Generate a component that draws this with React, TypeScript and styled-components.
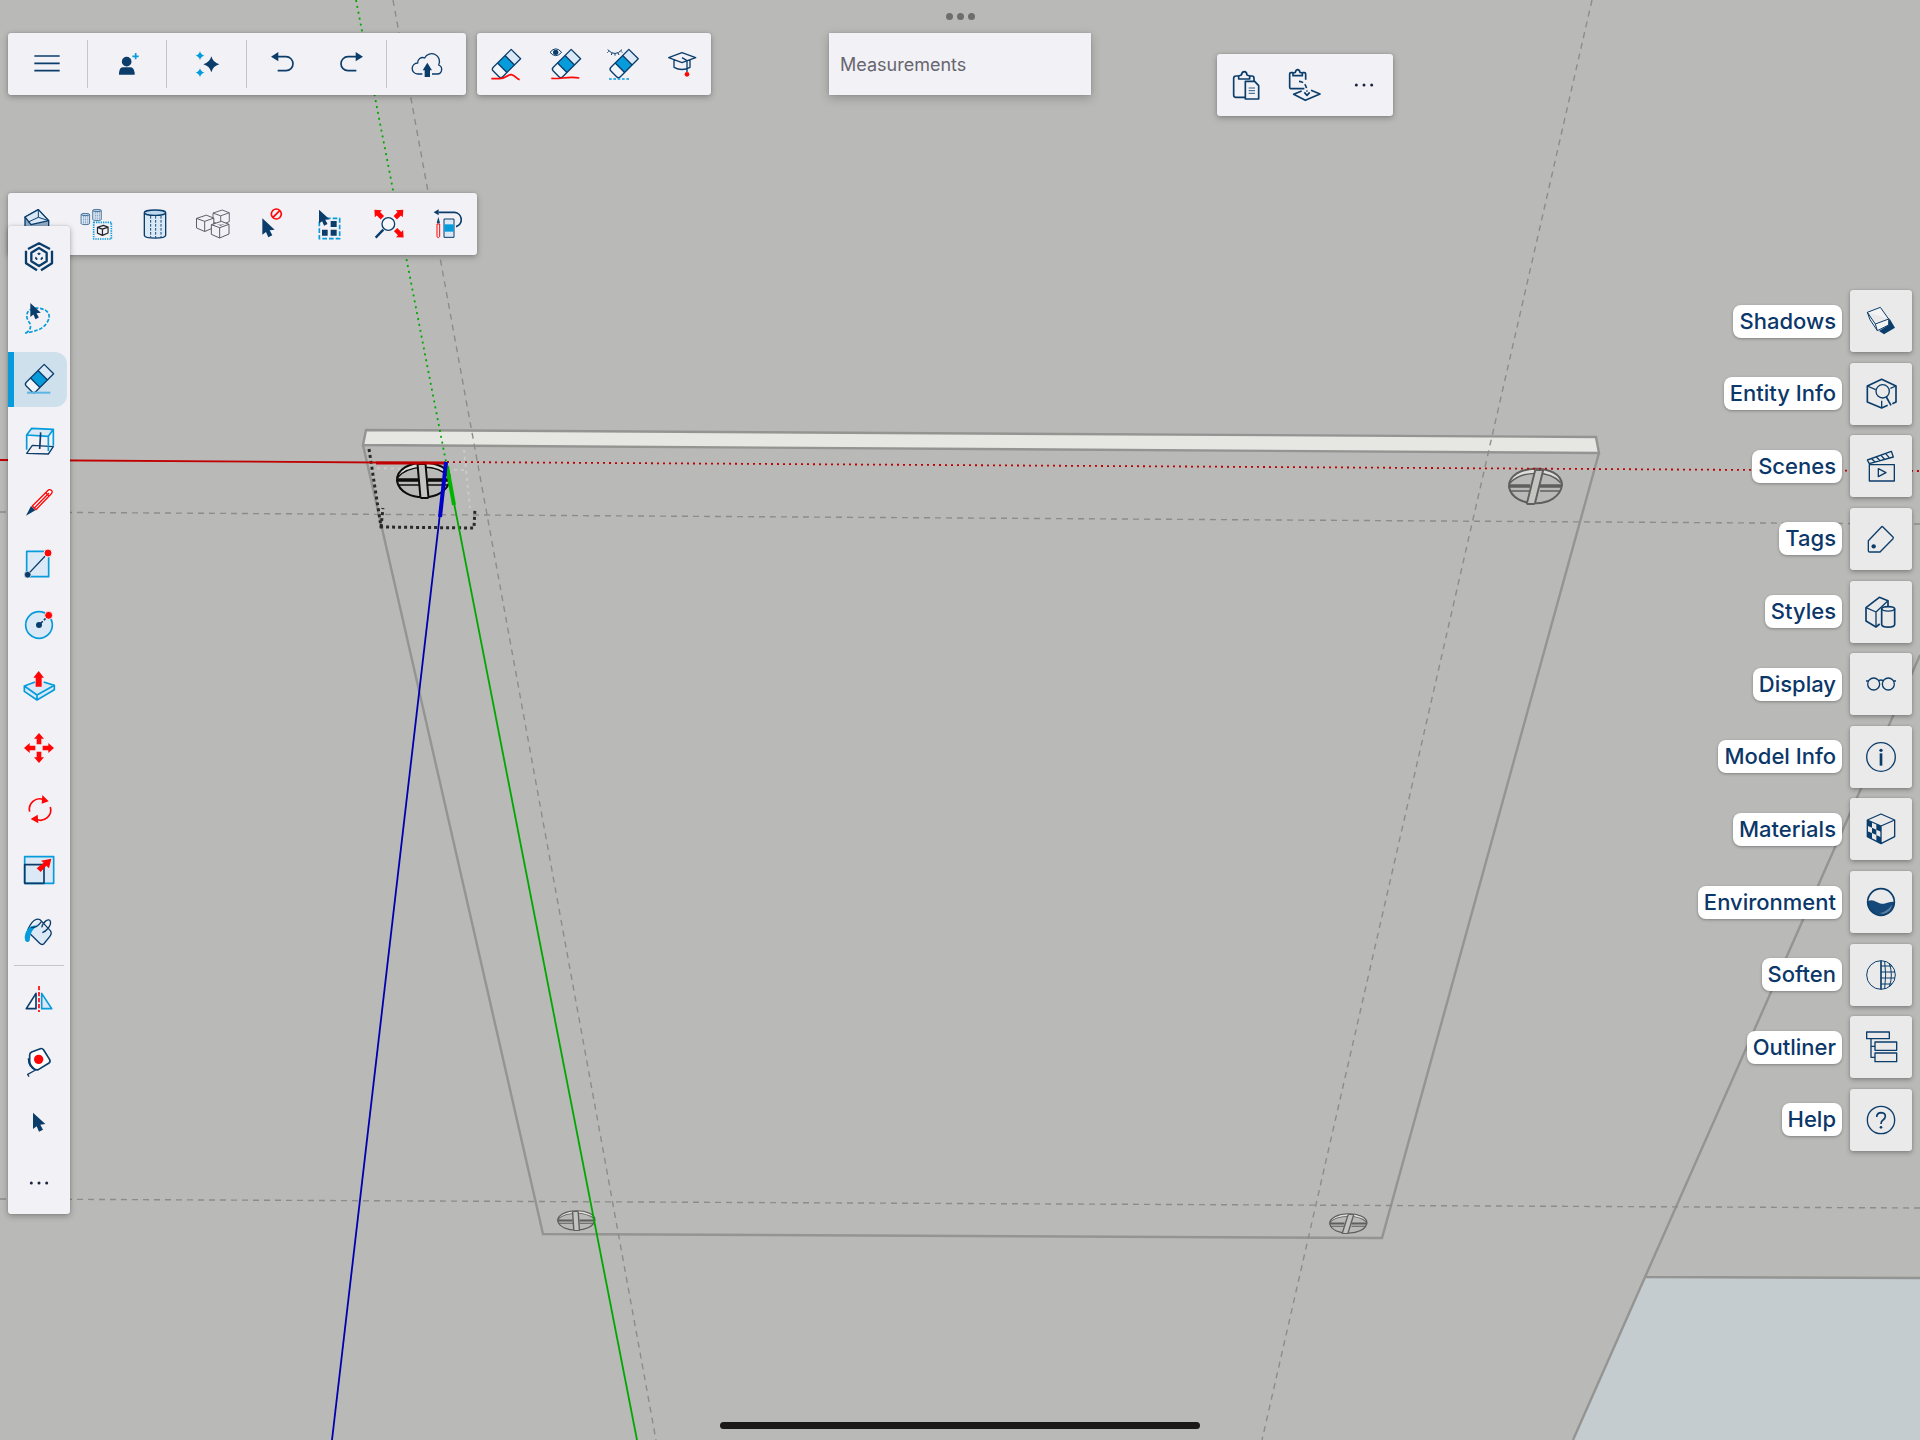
import React from "react";
import styled, { createGlobalStyle } from "styled-components";

const NAVY = "#0b3d6b";
const BLUE = "#069bdb";
const PALE = "#dbe9f7";
const RED = "#ff0505";

const GlobalStyle = createGlobalStyle`
  *, *::before, *::after { box-sizing: border-box; }
  body {
    margin: 0;
    background: #b9b9b7;
    font-family: Inter, "Liberation Sans", sans-serif;
  }
  button, input { font: inherit; }
`;

/* ---------- layout ---------- */

const Stage = styled.div`
  position: relative;
  display: flex;
  flex-direction: column;
  min-height: 100vh;
  padding: 0 8px;
  overflow: hidden;
`;

const Viewport = styled.svg`
  position: absolute;
  inset: 0;
  width: 100%;
  height: 100%;
`;

const WindowHandle = styled.button`
  position: relative;
  display: flex;
  align-items: center;
  justify-content: center;
  align-self: center;
  gap: 4px;
  height: 33px;
  padding: 0;
  border: 0;
  background: none;
`;

const HandleDot = styled.span`
  width: 7px;
  height: 7px;
  border-radius: 50%;
  background: #6e6e6c;
`;

const Header = styled.header`
  position: relative;
  display: grid;
  grid-template-columns: 1fr 262px 1fr;
  align-items: start;
  min-height: 160px;
`;

const HeaderLeft = styled.div`
  display: flex;
  gap: 11px;
`;

const HeaderRight = styled.div`
  padding: 21px 0 0 126px;
`;

const Body = styled.main`
  position: relative;
  display: flex;
  flex: 1;
  align-items: flex-start;
  justify-content: space-between;
`;

const LeftColumn = styled.div`
  display: flex;
  flex-direction: column;
  align-items: flex-start;
`;

const Panel = styled.div`
  display: flex;
  background: #f2f1f6;
  border-radius: 3px;
  box-shadow: 0 2px 6px rgba(0, 0, 0, 0.28), 0 0 2px rgba(0, 0, 0, 0.15);
`;

const Toolbar = styled(Panel)<{ $width: number }>`
  width: ${(p) => p.$width}px;
  height: 62px;
`;

const Segment = styled.div<{ $grow?: number }>`
  display: flex;
  flex: ${(p) => p.$grow ?? 1} 1 0;
  margin: 7px 0;

  & + & {
    border-left: 1px solid #c6c6ca;
  }
`;

const ToolButton = styled.button`
  display: flex;
  flex: 1 1 0;
  align-items: center;
  justify-content: center;
  min-width: 0;
  padding: 0;
  border: 0;
  background: none;
`;

const SideBar = styled(Panel)`
  position: relative;
  flex-direction: column;
  width: 62px;
  min-height: 988px;
  margin-top: -29px;
`;

const SideButton = styled(ToolButton)<{ $active?: boolean }>`
  position: relative;
  z-index: 0;

  &::before {
    content: "";
    display: ${(p) => (p.$active ? "block" : "none")};
    position: absolute;
    z-index: -1;
    inset: 3px 3px 3px 0;
    border-left: 6px solid ${BLUE};
    border-radius: 0 12px 12px 0;
    background: #cfe0ed;
  }
`;

const Divider = styled.hr`
  width: 50px;
  height: 1px;
  margin: 2px auto 3px;
  border: 0;
  background: #c6c6ca;
`;

const MeasureField = styled.label`
  display: flex;
  height: 62px;
  background: #f2f1f6;
  box-shadow: 0 3px 10px rgba(0, 0, 0, 0.22), 0 0 2px rgba(0, 0, 0, 0.15);
`;

const MeasureInput = styled.input`
  width: 100%;
  padding: 0 11px;
  border: 0;
  outline: 0;
  background: none;
  color: #66666e;
  font-size: 18px;

  &::placeholder {
    color: #66666e;
    opacity: 1;
  }
`;

const InspectorNav = styled.nav`
  display: flex;
  flex-direction: column;
  align-items: flex-end;
  justify-content: space-between;
  min-height: 861px;
  margin-top: 97px;
`;

const InspectorButton = styled.button`
  display: flex;
  align-items: center;
  gap: 8px;
  padding: 0;
  border: 0;
  background: none;
`;

const InspectorLabel = styled.span`
  padding: 0 6px;
  border-radius: 8px;
  background: #fff;
  box-shadow: 0 1px 3px rgba(0, 0, 0, 0.3);
  color: #0c3769;
  font-size: 22px;
  font-weight: 500;
  line-height: 33px;
`;

const Tile = styled.span`
  display: flex;
  align-items: center;
  justify-content: center;
  width: 62px;
  height: 62px;
  border-radius: 3px;
  background: #eaeaea;
  box-shadow: 0 2px 5px rgba(0, 0, 0, 0.28), 0 0 2px rgba(0, 0, 0, 0.15);
`;

const HomeIndicator = styled.div`
  position: relative;
  align-self: center;
  width: 25vw;
  height: 7px;
  margin-bottom: 11px;
  border-radius: 4px;
  background: #1b1918;
`;

const Glyph = styled.svg`
  flex: none;
  width: 40px;
  height: 40px;
  fill: none;
  stroke-width: 5;
  stroke-linejoin: round;
`;

/* ---------- icon parts ---------- */

type Draw = React.ReactNode;

const Icon = ({ children }: { children: Draw }) => (
  <Glyph viewBox="-60 -60 120 120" aria-hidden="true">
    {children}
  </Glyph>
);

const Star = ({ x, y, s, c }: { x: number; y: number; s: number; c: string }) => (
  <path transform={`translate(${x} ${y}) scale(${s})`} fill={c} d="M0-24Q5-5 24 0Q5 5 0 24Q-5 5-24 0Q-5-5 0-24Z" />
);

const Eraser = ({ x = 0 }: { x?: number }) => (
  <g transform={`translate(${x} 0) rotate(45)`}>
    <path d="M-20-42H20V34Q20 42 12 42H-12Q-20 42-20 34Z" fill="#f0f5fb" />
    <path d="M-20-42H20V-16H-20Z" fill={PALE} />
    <path d="M-20-16H20V16H-20Z" fill={BLUE} />
    <path d="M-20-42H20V34Q20 42 12 42H-12Q-20 42-20 34ZM-20-16H20M-20 16H20" stroke={NAVY} strokeWidth="4" />
  </g>
);

const Cursor = ({ x, y, s = 1 }: { x: number; y: number; s?: number }) => (
  <path transform={`translate(${x} ${y}) scale(${s})`} fill={NAVY} d="M0 0L37 34L22 36L30 51L18 57L11 41L0 49Z" />
);

const Arrow = ({ t, s = 1 }: { t: string; s?: number }) => (
  <path transform={`${t} scale(${s})`} fill={RED} d="M0-45L15-28H7V-11H-7V-28H-15Z" />
);

const Cube = ({ x, y, s, c, w }: { x: number; y: number; s: number; c: string; w: number }) => (
  <path
    transform={`translate(${x} ${y}) scale(${s})`}
    stroke={c}
    strokeWidth={w}
    fill="#f2f1f6"
    d="M-26-15L4-25L27-16V13L-1 25L-26 14ZM-26-15L-1-6L27-16M-1-6V25"
  />
);

const Can = ({ x, y, s, w }: { x: number; y: number; s: number; w: number }) => (
  <g transform={`translate(${x} ${y}) scale(${s})`} stroke={NAVY} strokeWidth={w}>
    <path fill={PALE} d="M-32-34V34C-30 45 30 45 32 34V-34" />
    <ellipse cy="-34" rx="32" ry="8" fill="#bcd8ee" />
    <path strokeDasharray="8 4" strokeWidth={w * 0.7} d="M-13-24V40M2-24V42M18-24V40" />
  </g>
);

const Dots = () => (
  <g fill="#1c2440">
    <circle cx="-23" r="4.5" />
    <circle r="4.5" />
    <circle cx="23" r="4.5" />
  </g>
);

/* ---------- icons ---------- */

const undoShape = (
  <>
    <path d="M-33-22L-11-36V-8Z" fill={NAVY} />
    <path d="M-12-22H12A21 21 0 0 1 12 20H-13" stroke={NAVY} />
  </>
);

const mainIcons: Record<string, Draw> = {
  menu: <path d="M-38-24H38M-38-2H38M-38 20H38" stroke={NAVY} />,
  person: (
    <>
      <circle cx="-1" cy="-7" r="14.5" fill={NAVY} />
      <path d="M-24 32V26Q-22 10-12 10H10Q20 10 23 26V32Z" fill={NAVY} />
      <path d="M26-33V-14M16-23H35" stroke={BLUE} />
    </>
  ),
  sparkle: (
    <>
      <Star x={16} y={1} s={1} c={NAVY} />
      <Star x={-18} y={-25} s={0.55} c={BLUE} />
      <Star x={-18} y={26} s={0.55} c={BLUE} />
    </>
  ),
  undo: undoShape,
  redo: <g transform="scale(-1 1)">{undoShape}</g>,
  cloud: (
    <>
      <path
        d="M-14 30H-28A16 16 0 0 1-28-3A15 15 0 0 1-7-18A23 23 0 0 1 35 3A14 14 0 0 1 31 30H15"
        stroke={NAVY}
        strokeWidth="4"
      />
      <path d="M1-4L15 19H9V39H-7V19H-13Z" fill={NAVY} />
    </>
  ),
};

const eraseIcons: [string, Draw][] = [
  [
    "Erase edges",
    <>
      <Eraser />
      <path d="M-44 44H-20C0 44 4 31 16 32C28 34 32 46 41 47" stroke={RED} />
    </>,
  ],
  [
    "Erase and show",
    <>
      <Eraser x={3} />
      <path d="M-45-35Q-28-56-10-35Q-28-15-45-35Z" fill="#f2f1f6" stroke={NAVY} strokeWidth="3" />
      <circle cx="-28" cy="-35" r="8" fill={NAVY} />
      <path d="M-41 43C-15 46 10 36 43 42" stroke={RED} />
    </>,
  ],
  [
    "Hide",
    <>
      <Eraser x={2} />
      <path
        d="M-46-43Q-24-20-3-43M-43-38L-47-34M-33-33L-35-27M-24-31V-25M-15-33L-12-27M-6-38L-2-34"
        stroke={NAVY}
        strokeWidth="3"
      />
      <path d="M-42 45H19" stroke={BLUE} strokeDasharray="8 5" />
    </>,
  ],
  [
    "Learn",
    <>
      <path d="M-40-19L0-34L41-19L0-4ZM-24-11V10Q0 23 24 10V-11" stroke={NAVY} strokeWidth="4" />
      <path d="M0-19L15-10V24" stroke={NAVY} strokeWidth="4" />
      <circle cx="15" cy="31" r="7" fill={RED} />
    </>,
  ],
];

const clipIcons: [string, Draw][] = [
  [
    "Paste",
    <g stroke={NAVY}>
      <path d="M-21-27H-30Q-37-27-37-20V30Q-37 37-30 37H-2M10-27H18Q24-27 24-20V-11" />
      <path d="M-22-18V-27L-14-30Q-12-40-5-40Q2-40 3-30L11-27V-18Z" />
      <path d="M-2-11H26L38 2V42H-2Z" />
      <path strokeWidth="2.5" d="M8 9H27M8 17H27M8 25H27" />
    </g>,
  ],
  [
    "Paste in place",
    <g stroke={NAVY}>
      <path d="M-36-37H-42Q-46-37-46-33V7Q-46 11-42 11H-2M-8-37H-2Q2-37 2-33V-16" />
      <path d="M-36-28V-36L-29-38Q-27-46-22-46Q-17-46-15-38L-8-36V-28Z" />
      <path d="M-10 18L-34 28L1 46L45 27L18 16M-2 22L6 31L14 22" />
      <path strokeDasharray="13 7" d="M-18-11Q4-10 6 20" />
    </g>,
  ],
  ["More clipboard actions", <Dots />],
];

const modelIcons: [string, Draw][] = [
  [
    "Solid tools",
    <g stroke={NAVY} strokeWidth="4">
      <path fill="#8fabc4" d="M-36-21L4-43L35-10V18L-5 35L-36 10Z" />
      <path fill={PALE} d="M-36-21L4-43L35-10L-18 2Z" />
      <path strokeWidth="3" d="M4-43V-20L35-10M4-20L-26-6" />
    </g>,
  ],
  [
    "Make component",
    <>
      <Can x={-32} y={-15} s={0.4} w={5} />
      <Can x={3} y={-27} s={0.4} w={5} />
      <path d="M-7-5H46V45H-7Z" stroke={BLUE} strokeDasharray="4 3" />
      <Cube x={20} y={19} s={0.6} c="#20242c" w={6} />
    </>,
  ],
  ["Group", <Can x={0} y={0} s={1} w={4} />],
  [
    "Explode",
    <>
      <Cube x={24} y={-19} s={0.92} c="#5a5a66" w={3} />
      <Cube x={-24} y={-2} s={0.98} c="#5a5a66" w={3} />
      <Cube x={21} y={17} s={1} c="#5a5a66" w={3} />
    </>,
  ],
  [
    "Deselect",
    <>
      <Cursor x={-29} y={-17} />
      <circle cx="13" cy="-30" r="15" stroke={RED} />
      <path d="M3-20L23-40" stroke={RED} />
    </>,
  ],
  [
    "Select all",
    <>
      <path d="M-32-17H29V44H-32Z" stroke={BLUE} strokeDasharray="14 6" />
      <path fill={NAVY} d="M2-9H20V9H2ZM-24 17H-7V35H-24ZM2 17H20V35H2Z" />
      <path fill="#f2f1f6" d="M-40-25H-12V-2H-28V-10H-40Z" />
      <Cursor x={-33} y={-43} s={0.85} />
    </>,
  ],
  [
    "Zoom extents",
    <>
      <circle cx="-2" cy="0" r="19" stroke={NAVY} strokeWidth="4" fill="#f6f8fc" />
      <path d="M-17 17L-40 41" stroke={NAVY} strokeWidth="7" />
      <Arrow t="translate(-12 -11) rotate(-45)" />
      <Arrow t="translate(11 -11) rotate(45)" />
      <Arrow t="translate(12 9) rotate(135)" />
    </>,
  ],
  [
    "Undo erase",
    <>
      <path d="M-28-35H20A22 22 0 0 1 24 8" stroke={NAVY} />
      <path d="M-43-35L-28-44V-26Z" fill={NAVY} />
      <path d="M-33 0H-25V38Q-29 44-33 38Z" stroke={RED} strokeWidth="3" />
      <path d="M-29-22L-24-2H-34Z" fill={NAVY} />
      <path d="M-12-15H18V40H-12Z" fill={PALE} stroke={NAVY} strokeWidth="3" />
      <path d="M-11 1H17V23H-11Z" fill={BLUE} />
    </>,
  ],
];

const sideIcons: [string, Draw][] = [
  [
    "SketchUp",
    <g stroke={NAVY}>
      <path strokeWidth="7" d="M-39-19V19L-6 40M39-19V19L6 40M-33-24L0-41L33-24" />
      <path strokeWidth="7" d="M0-27L23-13V13L0 27L-23 13V-13Z" />
      <path fill={NAVY} strokeWidth="3" d="M-4-10L0-12L4-10L0-7ZM-10 1L-6 4V8L-10 6ZM10 1L6 4V8L10 6Z" />
    </g>,
  ],
  [
    "Lasso",
    <>
      <path
        d="M-40 45C-24 38-22 22-30 12C-42-4-40-30-5-30C34-26 36-4 24 14C10 36-14 40-40 45Z"
        stroke={BLUE}
        strokeDasharray="11 5"
      />
      <Cursor x={-26} y={-45} s={0.85} />
    </>,
  ],
  [
    "Eraser",
    <>
      <Eraser />
      <path d="M-36 41H34" stroke="#5ab5e5" strokeWidth="6" />
    </>,
  ],
  [
    "Position model",
    <>
      <path d="M-37 37L-20 13L43 17L28 39Z" stroke={NAVY} strokeWidth="4" />
      <path d="M-22-38L43-35L28-14L-37-18Z" fill={PALE} />
      <path d="M-37 26V-18L-22-38L43-35V14M-37-18L28-14L43-35M28-14V30" stroke={BLUE} />
      <path d="M5-26L2 24" stroke={NAVY} />
    </>,
  ],
  [
    "Pencil",
    <>
      <path
        d="M-20 12L26-34Q32-40 37-35Q42-30 37-25L-9 23ZM20-28L31-17M-14 18L30-27"
        fill="#fff"
        stroke={RED}
        strokeWidth="4"
      />
      <path d="M-39 41L-24 12L-11 25Z" fill={NAVY} />
    </>,
  ],
  [
    "Rectangle",
    <>
      <path d="M-37-38H29V38H-37Z" fill={PALE} stroke={BLUE} />
      <path d="M-34 32L27-33" stroke={NAVY} strokeWidth="4" />
      <circle cx="27" cy="-33" r="12" fill={RED} stroke="#f2f1f6" strokeWidth="3" />
      <circle cx="-34" cy="32" r="10" fill={NAVY} stroke="#f2f1f6" strokeWidth="2" />
    </>,
  ],
  [
    "Circle",
    <>
      <circle r="40" fill={PALE} stroke={BLUE} />
      <path d="M0 0L29-29" stroke={NAVY} strokeDasharray="16 5" />
      <circle r="9" fill={NAVY} />
      <circle cx="29" cy="-29" r="12" fill={RED} stroke="#f2f1f6" strokeWidth="3" />
    </>,
  ],
  [
    "Push/Pull",
    <>
      <path d="M-44 0L0-16L46-2V11L-6 42L-44 16Z" fill={PALE} />
      <path d="M-12-12L-44 0V16L-6 42L46 11V-2L14-12M-44 0L-6 27L46-2M-6 27V42" stroke={BLUE} />
      <path d="M-1-45L15-25H8V2H-10V-25H-17Z" fill={RED} />
    </>,
  ],
  [
    "Move",
    <>
      <Arrow t="rotate(0)" />
      <Arrow t="rotate(90)" />
      <Arrow t="rotate(180)" />
      <Arrow t="rotate(270)" />
    </>,
  ],
  [
    "Rotate",
    <>
      <path d="M-28 8A31 31 0 0 1 14-28M34-6A31 31 0 0 1-8 31" stroke={RED} strokeWidth="5" />
      <path d="M10-42L29-23L8-16ZM-25 30L-4 17L-2 43Z" fill={RED} />
    </>,
  ],
  [
    "Scale",
    <>
      <path d="M-43-40H44V40H-43Z" fill={PALE} stroke={BLUE} strokeWidth="5" />
      <path d="M-43-16H15V40H-43Z" stroke={NAVY} strokeWidth="5" />
      <path d="M37-34L30-5L22-13L5 6L-7-5L14-22L6-28Z" fill={RED} />
    </>,
  ],
  [
    "Paint",
    <>
      <path d="M-4-37L38 6Q38 16 30 24L15 37Q8 40 2 34L-30 0Z" fill={PALE} />
      <path d="M-34-6Q-22-34-8-38Q2-40 8-32L34-4Q40 4 32 14L14 36Q8 40 2 34L-26 6" stroke={NAVY} strokeWidth="4" />
      <path d="M-43 16C-40-14-18-24-4-18C-20-10-26 4-28 26Q-34 34-41 27Z" fill={BLUE} />
      <path d="M-24-14C-10-10 2-24 8-32M8-14C14-34 30-42 34-32C38-20 22-2 10 2" stroke={NAVY} strokeWidth="4" />
    </>,
  ],
];

const sideExtraIcons: [string, Draw][] = [
  [
    "Flip",
    <>
      <path d="M-38 29L-9-17V29Z" fill="#f6f8fc" stroke={NAVY} />
      <path d="M8-17V29H38Z" fill={PALE} stroke={BLUE} />
      <path d="M0-39V39" stroke={RED} strokeWidth="5" strokeDasharray="13 5" />
    </>,
  ],
  [
    "Tape measure",
    <>
      <path
        d="M-28-18Q-28-24-22-27L4-37Q10-39 14-33L32-4Q35 2 30 6L-2 26Q-10 28-16 22Q-28 12-28 0Z"
        fill="#fff"
        stroke={NAVY}
      />
      <path d="M-32-8C-32 10-24 22-10 27L-34 40L-30 47" stroke={NAVY} strokeWidth="4" />
      <circle cx="-1" cy="-5" r="14" fill={RED} />
    </>,
  ],
  ["Select", <Cursor x={-18} y={-28} />],
  ["More tools", <Dots />],
];

const inspectorIcons: [string, Draw][] = [
  [
    "Shadows",
    <>
      <path d="M-6 30L23 12L25-8L42 20L9 40Z" fill={NAVY} />
      <path
        d="M-41-26L-2-41L23-6L-17 9ZM-41-26L-33-4L-11 29L23 12V-6M-17 9L-11 29"
        fill="#f3f3f3"
        stroke={NAVY}
        strokeWidth="3"
      />
    </>,
  ],
  [
    "Entity Info",
    <g stroke={NAVY}>
      <path strokeWidth="5" d="M20 34L2 42L-41 24V-24L2-44L45-24V24L34 29" />
      <path d="M-41-24L-16-13M45-24L28-17M2 20V42" strokeWidth="4" />
      <circle cx="5" cy="-8" r="20" strokeWidth="4" />
      <path d="M16 9L30 34" />
    </g>,
  ],
  [
    "Scenes",
    <g stroke={NAVY} strokeWidth="4">
      <path d="M-41-18L31-44L37-27L-35-7ZM-28-22L-18-12M-14-27L-4-17M0-32L10-21M14-37L24-26" />
      <path d="M-35-4H40V45H-35ZM-8 8L15 20L-8 32Z" />
    </g>,
  ],
  [
    "Tags",
    <>
      <path d="M5-37L36-6Q38-4 36-1L-3 39H-34Q-38 39-38 35V5L2-37Q4-38 5-37Z" stroke={NAVY} strokeWidth="4" />
      <circle cx="-22" cy="22" r="6.5" fill={NAVY} />
    </>,
  ],
  [
    "Styles",
    <g stroke={NAVY} strokeWidth="5">
      <path d="M-4 36L-15 45L-45 27V-13L-5-44L21-34V-18" />
      <path strokeWidth="4" d="M-45-13L-15 0L21-34M-15 0V45" />
      <path fill="#eaeaea" d="M2-10V38C4 48 39 48 41 38V-10C39-18 4-18 2-10Z" />
      <path strokeWidth="4" d="M2-10C4 0 39 0 41-10" />
    </g>,
  ],
  [
    "Display",
    <g stroke={NAVY} strokeWidth="4">
      <circle cx="-22" r="18" />
      <circle cx="22" r="18" />
      <path d="M-45-9H-38M38-9H45M-7-10Q0-14 7-10" />
    </g>,
  ],
  [
    "Model Info",
    <g stroke={NAVY}>
      <circle r="43" strokeWidth="4" />
      <path d="M0-11V26" strokeWidth="8" />
      <circle cy="-20" r="5" fill={NAVY} stroke="none" />
    </g>,
  ],
  [
    "Materials",
    <>
      <path
        fill={NAVY}
        d="M-41-27L-27-21V-4L-41-10ZM-27-4L-14 2V18L-27 12ZM-14-15L0-9V8L-14 2ZM-41 7L-27 12V30L-41 23ZM-14 18L0 25V44L-14 37Z"
      />
      <path d="M0-45L41-27V23L0 44L-41 23V-27ZM-41-27L0-9L41-27M0-9V44" stroke={NAVY} strokeWidth="4" />
    </>,
  ],
  [
    "Environment",
    <>
      <path d="M-40-2C-20-14-8 12 14 4Q28-2 40 0A40 40 0 0 1-40-2Z" fill="#17487a" />
      <path d="M-4 34Q22 26 32 8Q34 30 6 36Z" fill="#5a7fa2" />
      <circle r="40" stroke={NAVY} />
    </>,
  ],
  [
    "Soften",
    <g stroke={NAVY} strokeWidth="3">
      <circle r="43" />
      <path d="M0-43V43" strokeWidth="5" />
      <path d="M0-27H33M0-9H42M0 9H42M0 27H33M11-41Q17 0 11 41M25-35Q37 0 25 35" />
    </g>,
  ],
  [
    "Outliner",
    <g stroke={NAVY} strokeWidth="4">
      <path d="M-43-45H25V-25H-43ZM-18-15H47V10H-18ZM-18 18H47V44H-18Z" />
      <path d="M-30-25V31H-18M-30-2H-18" />
    </g>,
  ],
  [
    "Help",
    <g stroke={NAVY}>
      <circle r="41" strokeWidth="4" />
      <path d="M-13-9Q-12-22 1-22Q13-21 13-11Q13-5 6 0Q0 4 0 12" strokeWidth="5" />
      <circle cy="22" r="4" fill={NAVY} stroke="none" />
    </g>,
  ],
];

/* ---------- 3D view ---------- */

type ScrewProps = { x: number; y: number; s: number; color: string; tilt: number; flat?: number };

const Screw = ({ x, y, s, color, tilt, flat = 1 }: ScrewProps) => (
  <g transform={`translate(${x} ${y}) scale(${s} ${s * flat})`} stroke={color} fill="none" strokeWidth="2">
    <path fill="#dededb" stroke="none" d="M-26-4C-18-22 18-22 26-6C16-17-14-17-26-4Z" />
    <path d="M-26 0C-27-24 27-24 27-2C24 22-22 22-26 0Z" />
    <path strokeWidth="1.5" d="M-26-3C-14-17 14-17 26-4" />
    <path strokeWidth="3.5" d="M-26-1H-5M5-1H26" />
    <path strokeWidth="1.5" d="M-25 4H-4M5 4H25" />
    <g transform={`skewX(${tilt})`}>
      <path fill="#c4c4c1" stroke="none" d="M-4-17H4V17H-4Z" />
      <path d="M-4-17V17M4-17V17M-4-17H4M-4 17H4" />
    </g>
  </g>
);

const Scene = () => (
  <Viewport viewBox="0 0 1920 1440" preserveAspectRatio="xMidYMid slice" fill="none" aria-hidden="true">
    <path fill="#b9b9b7" d="M0 0H1920V1440H0Z" />
    <path fill="#c4cccf" d="M1646 1277L1920 1278V1440H1573Z" />
    <g stroke="#949492" strokeWidth="2.4">
      <path d="M1920 655L1573 1440M1646 1277L1920 1278" />
      <path d="M363 445L543 1234L1382 1238L1599 453" />
      <path fill="#e6e7e2" d="M366 430L1596 437L1599 453L363 445Z" />
    </g>
    <g stroke="#8c8c8a" strokeWidth="1.4" strokeDasharray="6 5">
      <path d="M393 0L656 1440M1592 0L1262 1440M0 512L1920 524M0 1199L1920 1208" />
    </g>
    <path stroke="#cacac8" strokeWidth="2" strokeDasharray="3 4" d="M370 468L465 470M464 450L470 508" />
    <path stroke="#2a2a2a" strokeWidth="3" strokeDasharray="3 3" d="M369 449L381 527L474 528L475 508M381 527L383 508" />
    <Screw x={423} y={481} s={1} color="#0c0c0c" tilt={5} />
    <Screw x={1535} y={487} s={1} color="#5f5f5d" tilt={-14} />
    <Screw x={576} y={1221} s={0.7} color="#5f5f5d" tilt={3} flat={0.8} />
    <Screw x={1348} y={1224} s={0.7} color="#5f5f5d" tilt={-14} flat={0.8} />
    <path stroke="#c00000" strokeWidth="1.8" d="M0 460L447 463" />
    <path stroke="#c00000" strokeWidth="1.8" strokeDasharray="2 4" d="M447 462L1920 471" />
    <path stroke="#c00000" strokeWidth="3" d="M376 463H446" />
    <path stroke="#00a800" strokeWidth="1.8" strokeDasharray="2 4" d="M356 0L446 462" />
    <path stroke="#00a800" strokeWidth="1.8" d="M446 462L637 1440" />
    <path stroke="#00b400" strokeWidth="4" d="M447 466L454 505" />
    <path stroke="#0000b0" strokeWidth="1.8" d="M446 462L332 1440" />
    <path stroke="#0000c8" strokeWidth="4" d="M446 462L440 517" />
  </Viewport>
);

/* ---------- page ---------- */

const Tool = ({ name, art }: { name: string; art: Draw }) => (
  <ToolButton type="button" aria-label={name}>
    <Icon>{art}</Icon>
  </ToolButton>
);

const ToolSet = ({ width, tools, label }: { width: number; tools: [string, Draw][]; label: string }) => (
  <Toolbar $width={width} role="toolbar" aria-label={label}>
    {tools.map(([name, art]) => (
      <Tool key={name} name={name} art={art} />
    ))}
  </Toolbar>
);

export default function App() {
  return (
    <>
      <GlobalStyle />
      <Stage>
        <Scene />
        <WindowHandle type="button" aria-label="Window options">
          <HandleDot />
          <HandleDot />
          <HandleDot />
        </WindowHandle>

        <Header>
          <HeaderLeft>
            <Toolbar $width={458} role="toolbar" aria-label="Main">
              <Segment>
                <Tool name="Menu" art={mainIcons.menu} />
              </Segment>
              <Segment>
                <Tool name="Collaborate" art={mainIcons.person} />
              </Segment>
              <Segment>
                <Tool name="Assistant" art={mainIcons.sparkle} />
              </Segment>
              <Segment $grow={1.78}>
                <Tool name="Undo" art={mainIcons.undo} />
                <Tool name="Redo" art={mainIcons.redo} />
              </Segment>
              <Segment>
                <Tool name="Save to cloud" art={mainIcons.cloud} />
              </Segment>
            </Toolbar>
            <ToolSet width={234} tools={eraseIcons} label="Eraser modes" />
          </HeaderLeft>
          <MeasureField>
            <MeasureInput type="text" placeholder="Measurements" aria-label="Measurements" />
          </MeasureField>
          <HeaderRight>
            <ToolSet width={176} tools={clipIcons} label="Clipboard" />
          </HeaderRight>
        </Header>

        <Body>
          <LeftColumn>
            <ToolSet width={469} tools={modelIcons} label="Model" />
            <SideBar role="toolbar" aria-label="Drawing tools">
              {sideIcons.map(([name, art]) => (
                <SideButton key={name} type="button" aria-label={name} $active={name === "Eraser"}>
                  <Icon>{art}</Icon>
                </SideButton>
              ))}
              <Divider />
              {sideExtraIcons.map(([name, art]) => (
                <SideButton key={name} type="button" aria-label={name}>
                  <Icon>{art}</Icon>
                </SideButton>
              ))}
            </SideBar>
          </LeftColumn>

          <InspectorNav aria-label="Inspectors">
            {inspectorIcons.map(([name, art]) => (
              <InspectorButton key={name} type="button">
                <InspectorLabel>{name}</InspectorLabel>
                <Tile>
                  <Icon>{art}</Icon>
                </Tile>
              </InspectorButton>
            ))}
          </InspectorNav>
        </Body>

        <HomeIndicator />
      </Stage>
    </>
  );
}
